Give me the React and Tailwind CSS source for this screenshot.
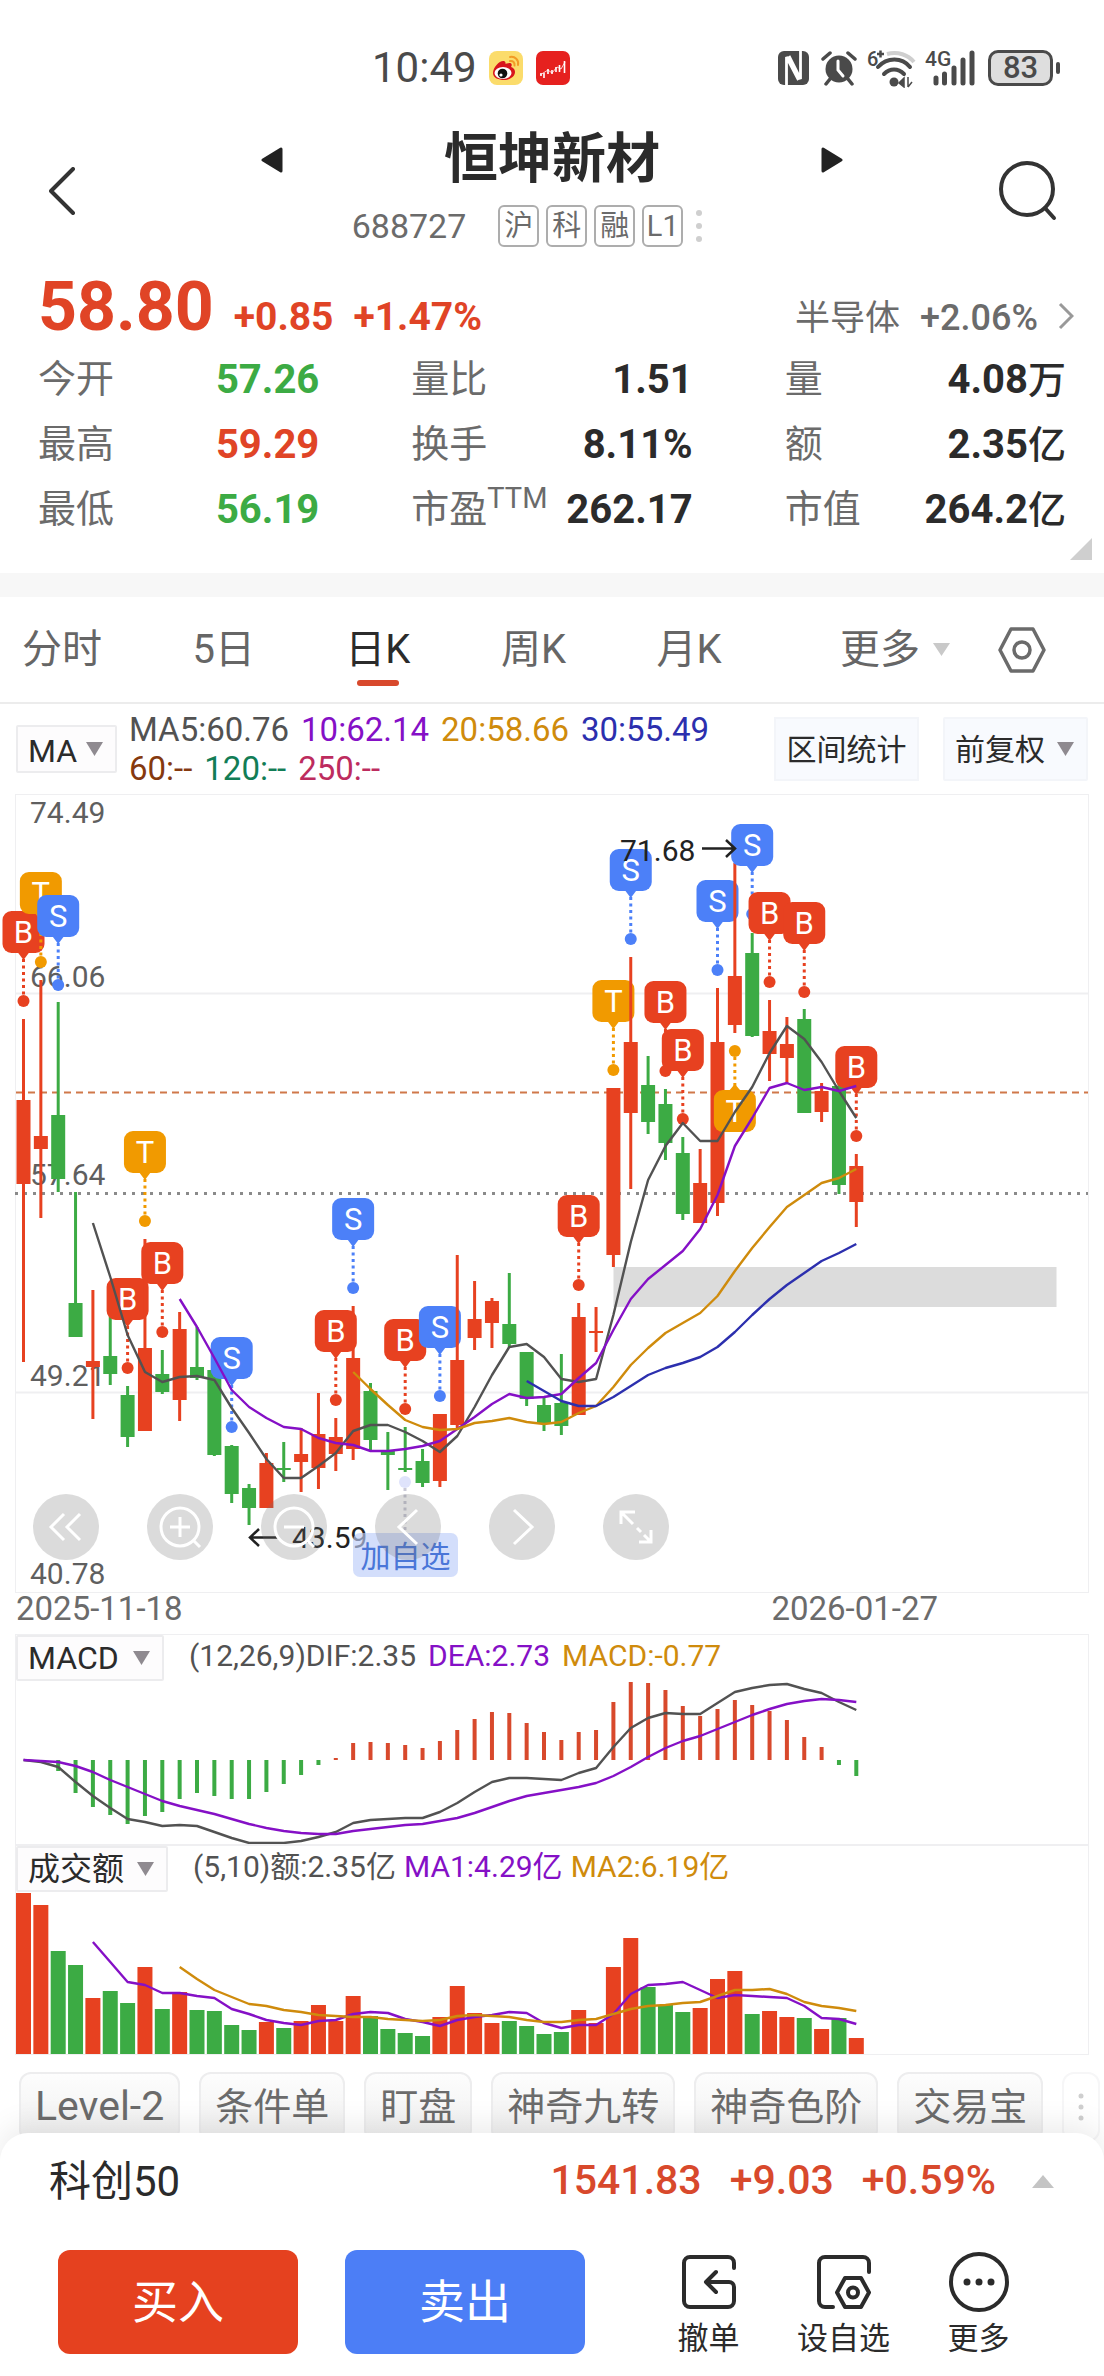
import React, { useState } from "react";

const RED = "#e74120";
const GREEN = "#3cab44";
const DARK = "#525252";
const PURPLE = "#8510c6";
const GOLD = "#cf8b0c";
const NAVY = "#2c2fae";

const STEP = 17.35;
const xAt = (i) => 23.5 + STEP * i;

// [direction, high, body top, body bottom, low]
const CANDLES = [
  ["r", 1019, 1100, 1184, 1362], ["r", 980, 1136, 1149, 1218], ["g", 1002, 1115, 1179, 1192],
  ["g", 1192, 1303, 1337, 1337], ["r", 1290, 1361, 1367, 1419], ["g", 1310, 1356, 1374, 1385],
  ["g", 1386, 1395, 1437, 1447], ["r", 1239, 1348, 1431, 1431], ["g", 1350, 1374, 1392, 1394],
  ["r", 1312, 1329, 1400, 1421], ["g", 1327, 1367, 1378, 1380], ["g", 1369, 1370, 1455, 1456],
  ["g", 1445, 1446, 1494, 1503], ["g", 1484, 1488, 1508, 1525], ["r", 1453, 1463, 1508, 1508],
  ["g", 1442, 1468, 1470, 1482], ["r", 1428, 1454, 1462, 1492], ["r", 1393, 1434, 1468, 1489],
  ["r", 1418, 1437, 1454, 1471], ["r", 1306, 1358, 1449, 1460], ["g", 1383, 1391, 1440, 1450],
  ["g", 1432, 1450, 1455, 1490], ["g", 1427, 1468, 1470, 1472], ["g", 1449, 1461, 1483, 1487],
  ["r", 1414, 1414, 1481, 1487], ["r", 1255, 1360, 1425, 1429], ["r", 1281, 1319, 1338, 1350],
  ["r", 1298, 1301, 1323, 1348], ["g", 1273, 1324, 1344, 1348], ["g", 1352, 1352, 1399, 1406],
  ["g", 1397, 1405, 1424, 1431], ["g", 1354, 1403, 1426, 1435], ["r", 1303, 1317, 1415, 1415],
  ["r", 1307, 1331, 1333, 1352], ["r", 1088, 1088, 1255, 1267], ["r", 957, 1042, 1113, 1189],
  ["g", 1056, 1085, 1122, 1134], ["g", 1089, 1104, 1143, 1160], ["g", 1137, 1153, 1214, 1220],
  ["r", 1149, 1183, 1223, 1223], ["r", 988, 1042, 1203, 1216], ["r", 863, 976, 1025, 1033],
  ["g", 933, 953, 1036, 1037], ["r", 1000, 1031, 1054, 1081], ["r", 1017, 1044, 1058, 1083],
  ["g", 1009, 1019, 1113, 1113], ["r", 1083, 1091, 1112, 1122], ["g", 1083, 1086, 1185, 1194],
  ["r", 1154, 1166, 1202, 1227],
];

// trade marks keyed by candle: [letter, top of the badge, badge under the dot]
const MARKS = {
  0: ["B", 911], 1: ["T", 872], 2: ["S", 895], 6: ["B", 1278], 7: ["T", 1131], 8: ["B", 1242],
  12: ["S", 1337], 18: ["B", 1310], 19: ["S", 1198], 22: ["B", 1319], 24: ["S", 1306],
  32: ["B", 1195], 34: ["T", 980], 35: ["S", 849], 37: ["B", 981], 38: ["B", 1029],
  40: ["S", 880], 41: ["T", 1090, true], 42: ["S", 824], 43: ["B", 892], 45: ["B", 902], 48: ["B", 1046],
};
const MARK_COLORS = { B: RED, S: "#4c80f8", T: "#f19a00" };

const MA5 = [
  1223, 1277, 1335, 1372, 1382, 1377, 1376, 1380, 1408, 1433, 1459, 1478, 1478, 1466, 1453, 1431,
  1425, 1425, 1432, 1441, 1452, 1436, 1407, 1375, 1347, 1344, 1357, 1379, 1382, 1379, 1315, 1242,
  1180, 1146, 1123, 1141, 1141, 1112, 1087, 1053, 1026, 1039, 1062, 1091, 1118,
];
const MA10 = [
  1299, 1327, 1358, 1390, 1407, 1418, 1427, 1429, 1438, 1443, 1445, 1451, 1451, 1449, 1446, 1441,
  1429, 1417, 1404, 1394, 1398, 1397, 1394, 1378, 1363, 1330, 1299, 1279, 1265, 1251, 1229, 1195,
  1146, 1118, 1088, 1083, 1090, 1087, 1091, 1086,
];
const MA20 = [
  1372, 1389, 1405, 1420, 1427, 1430, 1429, 1423, 1421, 1418, 1422, 1424, 1422, 1413, 1406, 1387,
  1365, 1348, 1333, 1323, 1313, 1296, 1271, 1248, 1227, 1207, 1195, 1183, 1178, 1169,
];
const MA30 = [
  1381, 1391, 1401, 1406, 1406, 1397, 1386, 1375, 1368, 1363, 1357, 1347, 1332, 1315, 1299, 1285,
  1273, 1261, 1253, 1244,
];

const MACD = [
  0, 0, 11, 33, 47, 55, 64, 56, 52, 39, 33, 36, 39, 39, 32, 24, 15, 5, -2, -17, -18, -17, -15, -12,
  -19, -30, -41, -48, -47, -37, -28, -20, -28, -30, -58, -78, -77, -70, -54, -44, -51, -60, -55,
  -49, -40, -23, -13, 5, 16,
];
const DIF = [
  0, 2, 7, 22, 36, 48, 59, 62, 66, 65, 66, 72, 78, 83, 83, 83, 81, 77, 72, 63, 60, 59, 58, 58, 52,
  43, 32, 22, 18, 18, 19, 20, 13, 8, -13, -32, -42, -47, -46, -46, -57, -68, -72, -75, -76, -71,
  -67, -58, -50,
];
const DEA = [
  0, 1, 2, 6, 12, 20, 27, 34, 41, 46, 50, 54, 59, 64, 68, 71, 73, 74, 74, 71, 69, 67, 65, 64, 61,
  58, 53, 47, 41, 36, 33, 30, 27, 23, 16, 7, -3, -12, -19, -24, -31, -38, -45, -51, -56, -59, -61,
  -60, -58,
];

const VOLUME = [
  161, 149, 103, 89, 56, 63, 51, 87, 45, 62, 44, 43, 29, 24, 32, 26, 33, 49, 33, 58, 38, 25, 21, 18,
  37, 68, 41, 31, 33, 28, 20, 22, 44, 31, 87, 116, 67, 49, 42, 46, 75, 83, 40, 43, 37, 36, 25, 36, 16,
];
const VOL_MA1 = [
  112, 92, 72, 69, 61, 61, 58, 56, 45, 40, 34, 31, 29, 33, 34, 40, 42, 41, 35, 32, 28, 34, 37, 39,
  42, 41, 31, 26, 29, 29, 40, 60, 69, 70, 72, 64, 56, 59, 58, 57, 56, 48, 36, 35, 30,
];
const VOL_MA2 = [
  87, 75, 64, 57, 50, 48, 44, 42, 39, 38, 37, 37, 35, 34, 33, 34, 38, 39, 38, 37, 34, 32, 32, 34,
  35, 40, 45, 48, 49, 51, 52, 58, 64, 64, 65, 60, 52, 48, 46, 43,
];

const STATS = [
  { label: "今开", value: "57.26", color: "text-[#3cab44]" },
  { label: "量比", value: "1.51", color: "text-[#2b2b2b]" },
  { label: "量", value: "4.08", unit: "万", color: "text-[#2b2b2b]" },
  { label: "最高", value: "59.29", color: "text-[#e04426]" },
  { label: "换手", value: "8.11%", color: "text-[#2b2b2b]" },
  { label: "额", value: "2.35", unit: "亿", color: "text-[#2b2b2b]" },
  { label: "最低", value: "56.19", color: "text-[#3cab44]" },
  { label: "市盈", sup: "TTM", value: "262.17", color: "text-[#2b2b2b]" },
  { label: "市值", value: "264.2", unit: "亿", color: "text-[#2b2b2b]" },
];

const TABS = ["分时", "5日", "日K", "周K", "月K"];
const CHIPS = ["Level-2", "条件单", "盯盘", "神奇九转", "神奇色阶", "交易宝"];

const points = (values, start, toY) =>
  values.map((v, k) => `${xAt(start + k).toFixed(1)},${toY(v)}`).join(" ");

function Line({ values, start = 0, color, toY = (v) => v }) {
  return <polyline points={points(values, start, toY)} fill="none" stroke={color} strokeWidth="2.4" strokeLinejoin="round" />;
}

// ── Status bar ─────────────────────────
function StatusBar() {
  return (
    <div className="pt-[47px] pl-[372px] pr-[44px] flex justify-between">
      <div className="h-[42px] flex items-center">
        <span className="text-[42px] leading-[42px] text-[#4a4a4a]">10:49</span>
        <svg className="ml-3 w-[34px] h-[34px]" viewBox="0 0 34 34">
          <rect width="34" height="34" rx="8" fill="#fbdc6b" />
          <path d="M4 22c0-6 7-13 11-12 2 .5 1.500 3 1.500 3s5-2 6 0c.7 1.500-.5 3-.5 3s4 1.200 4 5c0 5-6 8-11 8S4 27 4 22z" fill="#d8141c" />
          <ellipse cx="14" cy="22" rx="8.500" ry="6" fill="#fff" />
          <circle cx="13.500" cy="22.500" r="4.800" fill="#111" />
          <circle cx="12" cy="24" r="1.600" fill="#fff" />
          <path d="M21 6c5-1 9 3 8 8M21 10c3-.5 5 1.500 4.500 4.500" stroke="#f29b26" strokeWidth="2" fill="none" strokeLinecap="round" />
        </svg>
        <svg className="ml-[13px] w-[34px] h-[34px]" viewBox="0 0 34 34">
          <rect width="34" height="34" rx="7" fill="#e6211f" />
          <path d="M5 22v3M8 22v5M12 18v5M16 19v4M20 16v5M23.500 14v7M28.500 10v12" stroke="#fff" strokeWidth="1.600" />
          <path d="M4 24l8-5 4 3 5-6 4 2 4-7" stroke="#fff" strokeWidth=".8" fill="none" />
        </svg>
      </div>
      <div className="h-[42px] flex items-center text-[#4a4a4a]">
        <svg className="w-[31px] h-[34px]" viewBox="0 0 31 34">
          <rect width="31" height="34" rx="6" fill="currentColor" />
          <path d="M8.500 34V6l12 23M22.500 0v28L11 5" fill="none" stroke="#fff" strokeWidth="2.800" />
        </svg>
        <svg className="ml-3 w-[36px] h-[36px]" viewBox="0 0 36 36">
          <circle cx="18" cy="19" r="13.500" fill="currentColor" />
          <path d="M2 9l7-6M34 9l-7-6M9 29l-4 5M27 29l4 5" stroke="currentColor" strokeWidth="3.500" strokeLinecap="round" />
          <path d="M17 11v9l5 6" fill="none" stroke="#fff" strokeWidth="3" strokeLinecap="round" />
        </svg>
        <svg className="ml-[10px] w-[50px] h-[40px]" viewBox="0 0 50 40">
          <text x="0" y="18" fontSize="20" fontWeight="500" fill="currentColor">6</text>
          <path d="M10 6h7M13.500 2.500v7" stroke="currentColor" strokeWidth="2.500" />
          <path d="M20 6c11-3 21 1 27 8" fill="none" stroke="#cfcfcf" strokeWidth="4" />
          <path d="M11 19c9-10 24-10 32 0M17 26c6-6 14-6 20 0" fill="none" stroke="currentColor" strokeWidth="4" strokeLinecap="round" />
          <circle cx="27" cy="34" r="4.500" fill="currentColor" />
          <path d="M37 30v9l-5-4zM41 29v10M41 39l4-5" fill="currentColor" stroke="currentColor" strokeWidth="1.500" />
        </svg>
        <svg className="ml-2 w-[52px] h-[40px]" viewBox="0 0 52 40">
          <text x="0" y="18" fontSize="21" fontWeight="500" fill="currentColor">4G</text>
          <path d="M11 30v5M19.500 26v9M29 20v15M38 12v23M47 5v30" stroke="currentColor" strokeWidth="5" strokeLinecap="round" />
        </svg>
        <div className="ml-[11px] w-[65px] h-[36px] rounded-[10px] border-[3px] border-[#4a4a4a] bg-[#dedede] flex items-center justify-center">
          <span className="text-[31px] leading-[30px] font-medium">83</span>
        </div>
        <span className="ml-[3px] w-[4px] h-[12px] rounded bg-[#4a4a4a]" />
      </div>
    </div>
  );
}

// ── Title bar ──────────────────────────
function Header() {
  return (
    <header className="pt-[38px] px-[49px] flex items-center justify-between">
      <button type="button" aria-label="返回" className="w-14">
        <svg className="w-[28px] h-[48px]" viewBox="0 0 28 48">
          <path d="M24 2L2 24l22 22" fill="none" stroke="#333" strokeWidth="4" strokeLinecap="round" strokeLinejoin="round" />
        </svg>
      </button>
      <div className="w-[582px] pb-2">
        <div className="flex items-center justify-between">
          <button type="button" aria-label="上一只">
            <svg className="w-[22px] h-[26px]" viewBox="0 0 22 26"><path d="M20 2v22L2 13z" fill="#222" stroke="#222" strokeWidth="3" strokeLinejoin="round" /></svg>
          </button>
          <h1 className="text-[54px] leading-[66px] font-bold text-[#2b2b2b]">恒坤新材</h1>
          <button type="button" aria-label="下一只">
            <svg className="w-[22px] h-[26px]" viewBox="0 0 22 26"><path d="M2 2v22l18-11z" fill="#222" stroke="#222" strokeWidth="3" strokeLinejoin="round" /></svg>
          </button>
        </div>
        <div className="mt-3 pr-[50px] h-[42px] flex items-center justify-center text-[#6b6b6b]">
          <span className="mr-8 text-[34px] leading-[42px]">688727</span>
          <div className="flex gap-[7px]">
            {["沪", "科", "融", "L1"].map((tag) => (
              <span key={tag} className="w-[41px] h-[42px] rounded-md border-2 border-[#adadad] flex items-center justify-center text-[29px] leading-[38px]">{tag}</span>
            ))}
          </div>
          <svg className="ml-[13px] w-[6px] h-[32px]" viewBox="0 0 6 32" fill="#cfcfcf">
            <circle cx="3" cy="3" r="3" /><circle cx="3" cy="16" r="3" /><circle cx="3" cy="29" r="3" />
          </svg>
        </div>
      </div>
      <button type="button" aria-label="搜索" className="w-14">
        <svg className="w-[58px] h-[60px]" viewBox="0 0 58 60">
          <circle cx="28" cy="28" r="26" fill="none" stroke="#333" strokeWidth="4" />
          <path d="M46 47l9 10" stroke="#333" strokeWidth="4" strokeLinecap="round" />
        </svg>
      </button>
    </header>
  );
}

// ── Quote ──────────────────────────────
function Quote() {
  return (
    <section className="relative px-[38px] pb-[31px]">
      <div className="h-[92px] pt-[18px] flex items-baseline leading-none text-[#e04426]">
        <span className="text-[68px] leading-[68px] font-bold">58.80</span>
        <span className="ml-5 text-[39px] font-bold">+0.85</span>
        <span className="ml-5 text-[39px] font-bold">+1.47%</span>
        <a href="#sector" className="ml-auto -mr-2 flex items-baseline text-[#6b6b6b]">
          <span className="text-[35px]">半导体</span>
          <span className="ml-5 text-[36px] font-medium">+2.06%</span>
          <svg className="ml-5 w-[16px] h-[28px]" viewBox="0 0 16 28"><path d="M2 2l12 12L2 26" fill="none" stroke="#999" strokeWidth="3" /></svg>
        </a>
      </div>
      <dl className="grid grid-cols-3 gap-x-[92px]">
        {STATS.map((s) => (
          <div key={s.label} className="h-[65px] flex items-center justify-between whitespace-nowrap">
            <dt className="text-[38px] text-[#6b6b6b]">
              {s.label}
              {s.sup && <sup className="text-[29px]">{s.sup}</sup>}
            </dt>
            <dd className={`text-[40px] font-bold ${s.color}`}>
              {s.value}
              {s.unit && <span className="text-[38px] font-medium">{s.unit}</span>}
            </dd>
          </div>
        ))}
      </dl>
      <svg className="absolute right-3 bottom-[13px] w-[22px] h-[22px]" viewBox="0 0 22 22"><path d="M22 0v22H0z" fill="#cfcfcf" /></svg>
    </section>
  );
}

// ── Period tabs ────────────────────────
function PeriodTabs() {
  const [active, setActive] = useState("日K");
  return (
    <nav className="h-[107px] px-[22px] flex items-center border-b-2 border-[#ececec] text-[40px] text-[#666]">
      <div className="w-[66%] h-full flex justify-between">
        {TABS.map((tab) => (
          <button key={tab} type="button" onClick={() => setActive(tab)} className={`relative h-full ${tab === active ? "text-[#2b2b2b]" : ""}`}>
            {tab}
            {tab === active && <span className="absolute bottom-4 left-1/2 -translate-x-1/2 w-[42px] h-[6px] rounded-full bg-[#d8492c]" />}
          </button>
        ))}
      </div>
      <button type="button" className="ml-auto flex items-center">
        更多
        <svg className="ml-[13px] w-[17px] h-[13px]" viewBox="0 0 17 13"><path d="M0 0h17L8.500 13z" fill="#c9c9c9" /></svg>
      </button>
      <button type="button" aria-label="设置" className="ml-12 mr-9">
        <svg className="w-[48px] h-[46px]" viewBox="0 0 48 46" fill="none" stroke="#6b6b6b" strokeWidth="3.500" strokeLinejoin="round">
          <path d="M13 2h22l11 21-11 21H13L2 23z" /><circle cx="24" cy="23" r="8" />
        </svg>
      </button>
    </nav>
  );
}

function Dropdown({ label, options, className }) {
  return (
    <div className={`relative shrink-0 rounded-[2px] border-2 text-[#2b2b2b] ${className}`}>
      <select aria-label={label} className="w-full h-full appearance-none bg-transparent pl-[10px] outline-none">
        {options.map((o) => <option key={o}>{o}</option>)}
      </select>
      <svg className="absolute right-3 top-1/2 -translate-y-1/2 w-[17px] h-[14px] pointer-events-none" viewBox="0 0 17 14"><path d="M0 0h17L8.500 14z" fill="#8f8a90" /></svg>
    </div>
  );
}

// ── Candle chart ───────────────────────
function Mark({ x, mark }) {
  const [letter, top, below] = mark;
  const color = MARK_COLORS[letter];
  const dotY = below ? top - 39 : top + 90;
  return (
    <g>
      {below
        ? <path d={`M${x - 6} ${top + 1}h12l-6 -7z`} fill={color} />
        : <path d={`M${x - 6} ${top + 41}h12l-6 8z`} fill={color} />}
      <line x1={x} x2={x} y1={below ? top - 4 : top + 48} y2={dotY} stroke={color} strokeWidth="3" strokeDasharray="3 3.500" />
      <circle cx={x} cy={dotY} r="6" fill={color} />
      <rect x={x - 21} y={top} width="42" height="42" rx="9" fill={color} />
      <text x={x} y={top + 32} fontSize="31" textAnchor="middle" fill="#fff">{letter}</text>
    </g>
  );
}

function CandleChart() {
  return (
    <svg className="block w-full h-auto overflow-visible" viewBox="16 795 1072 797" role="img" aria-label="日K线">
      <path d="M16 993.500H1088M16 1392.500H1088" stroke="#efeff1" strokeWidth="2" />
      <path d="M16 1092.500H1088" stroke="#d0784a" strokeWidth="2" strokeDasharray="7 5" />
      <path d="M15 1193.500H1088" stroke="#8a8a8a" strokeWidth="3" strokeDasharray="3 6" />
      <rect x="613.500" y="1267" width="443" height="40" fill="#dcdcdc" />
      <g fontSize="30" fill="#5f5f5f">
        <text x="30" y="823">74.49</text>
        <text x="30" y="987">66.06</text>
        <text x="30" y="1185">57.64</text>
        <text x="30" y="1386">49.21</text>
        <text x="30" y="1584">40.78</text>
      </g>
      {CANDLES.map(([dir, high, top, bottom, low], i) => {
        const color = dir === "r" ? RED : GREEN;
        return (
          <g key={i}>
            <line x1={xAt(i)} x2={xAt(i)} y1={high} y2={low} stroke={color} strokeWidth="3" />
            <rect x={xAt(i) - 7} y={top} width="14" height={bottom - top} fill={color} />
            {MARKS[i] && <Mark x={xAt(i)} mark={MARKS[i]} />}
          </g>
        );
      })}
      <Line values={MA5} start={4} color={DARK} />
      <Line values={MA10} start={9} color={PURPLE} />
      <Line values={MA20} start={19} color={GOLD} />
      <Line values={MA30} start={29} color={NAVY} />

      {/* highest and lowest price */}
      <g fontSize="30" fill="#222" stroke="none">
        <text x="620" y="861">71.68</text>
        <text x="292" y="1548">43.59</text>
      </g>
      <path d="M702 848.500h33M726 840l9 8.500-9 8.500M279 1537.500h-29M259 1529l-9 8.500 9 8.500" fill="none" stroke="#222" strokeWidth="2.500" />

      {/* date the stock was added to the watch list */}
      <circle cx="405" cy="1482" r="6" fill="#dfe3fb" />
      <path d="M405 1488v45" stroke="#c9c9d6" strokeWidth="3" strokeDasharray="3 3.500" />
      <rect x="353" y="1533" width="105" height="44" rx="7" fill="#bccdf9" fillOpacity=".65" />
      <text x="405.500" y="1567" fontSize="30" textAnchor="middle" fill="#4a76d8">加自选</text>
    </svg>
  );
}

function ChartControls() {
  const controls = [
    ["最左", <path key="p" d="M31 20L18 33l13 13M47 20L34 33l13 13" />],
    ["放大", <g key="p"><circle cx="33" cy="33" r="19" /><path d="M33 23v20M23 33h20M46 46l7 7" /></g>],
    ["缩小", <g key="p"><circle cx="33" cy="33" r="19" /><path d="M23 33h20M46 46l7 7" /></g>],
    ["左移", <path key="p" d="M42 16L24 33l18 17" />],
    ["右移", <path key="p" d="M25 16l18 17-18 17" />],
    ["全屏", <path key="p" d="M18 30V18h14M18 18l12 12M34 34l4 4M41 41l7 7M36 48h12V36" />],
  ];
  return (
    <div className="absolute left-[17px] bottom-8 flex gap-12">
      {controls.map(([name, shape]) => (
        <button key={name} type="button" aria-label={name} className="w-[66px] h-[66px] rounded-full bg-[#70707040]">
          <svg viewBox="0 0 66 66" fill="none" stroke="#fff" strokeWidth="3">{shape}</svg>
        </button>
      ))}
    </div>
  );
}

function MacdChart() {
  const toY = (v) => 80 + v;
  return (
    <svg className="block w-full h-auto" viewBox="16 0 1072 164" role="img" aria-label="MACD">
      {MACD.map((v, i) => (
        <rect key={i} x={xAt(i) - 2} y={v > 0 ? 80 : 80 + v} width="4" height={Math.abs(v)} fill={v > 0 ? GREEN : "#d8492c"} />
      ))}
      <Line values={DIF} color={DARK} toY={toY} />
      <Line values={DEA} color={PURPLE} toY={toY} />
    </svg>
  );
}

function VolumeChart() {
  const toY = (v) => 163 - v;
  return (
    <svg className="block w-full h-auto" viewBox="16 0 1072 163" role="img" aria-label="成交额">
      {VOLUME.map((v, i) => (
        <rect key={i} x={xAt(i) - 7.5} y={163 - v} width="15" height={v} fill={CANDLES[i][0] === "r" ? RED : GREEN} />
      ))}
      <Line values={VOL_MA1} start={4} color={PURPLE} toY={toY} />
      <Line values={VOL_MA2} start={9} color={GOLD} toY={toY} />
    </svg>
  );
}

function ChartPanel() {
  return (
    <section>
      <div className="h-[90px] px-4 flex items-center">
        <Dropdown label="主图指标" options={["MA", "BOLL"]} className="w-[101px] h-[48px] text-[32px] border-[#ececee] bg-[#fdfcfd]" />
        <div className="ml-3 text-[33px] leading-[39px]">
          <div className="flex gap-3">
            <span className="text-[#525252]">MA5:60.76</span>
            <span className="text-[#8510c6]">10:62.14</span>
            <span className="text-[#cf8b0c]">20:58.66</span>
            <span className="text-[#2c2fae]">30:55.49</span>
          </div>
          <div className="flex gap-3">
            <span className="text-[#85390e]">60:--</span>
            <span className="text-[#127d56]">120:--</span>
            <span className="text-[#bd2c5e]">250:--</span>
          </div>
        </div>
        <button type="button" className="ml-auto w-[145px] h-[64px] border-2 border-[#f3f5f9] bg-[#f8fafe] text-[30px] text-[#2b2b2b]">区间统计</button>
        <Dropdown label="复权" options={["前复权", "后复权", "不复权"]} className="ml-6 w-[145px] h-[64px] text-[30px] border-[#f3f5f9] bg-[#f8fafe]" />
      </div>

      <div className="relative mx-[15px] border border-[#efeff1]">
        <CandleChart />
        <ChartControls />
      </div>
      <div className="h-[41px] pl-4 pr-[166px] flex justify-between text-[33px] leading-[32px] text-[#6b6b6b]">
        <span>2025-11-18</span>
        <span>2026-01-27</span>
      </div>

      <div className="mx-[15px] border border-[#efeff1]">
        <div className="h-[45px] flex items-start text-[30px] leading-[42px]">
          <Dropdown label="副图指标" options={["MACD", "KDJ", "RSI"]} className="w-[148px] h-[46px] mr-[25px] text-[32px] border-[#ececee] bg-[#fdfcfd]" />
          <div className="flex gap-3">
            <span className="text-[#525252]">(12,26,9)DIF:2.35</span>
            <span className="text-[#8510c6]">DEA:2.73</span>
            <span className="text-[#cf8b0c]">MACD:-0.77</span>
          </div>
        </div>
        <MacdChart />
        <div className="h-[47px] flex items-start border-t-2 border-[#efeff1] text-[30px] leading-[42px]">
          <Dropdown label="副图指标二" options={["成交额", "成交量"]} className="w-[152px] h-[46px] mr-[25px] text-[32px] border-[#ececee] bg-[#fdfcfd]" />
          <div className="flex gap-2">
            <span className="text-[#525252]">(5,10)额:2.35亿</span>
            <span className="text-[#8510c6]">MA1:4.29亿</span>
            <span className="text-[#cf8b0c]">MA2:6.19亿</span>
          </div>
        </div>
        <VolumeChart />
      </div>
    </section>
  );
}

// ── Bottom sheet ───────────────────────
function Tool({ label, children }) {
  return (
    <button type="button" className="flex flex-col items-center text-[31px] leading-[50px] text-[#2b2b2b]">
      <svg className="w-[64px] h-[64px]" viewBox="0 0 64 64" fill="none" stroke="#2b2b2b" strokeWidth="4" strokeLinecap="round" strokeLinejoin="round">{children}</svg>
      {label}
    </button>
  );
}

function BottomSheet() {
  return (
    <footer className="relative -mt-6 rounded-t-[28px] bg-white shadow-[0_-8px_30px_rgba(0,0,0,0.08)]">
      <div className="h-[96px] pl-[49px] pr-[50px] flex items-center">
        <span className="text-[42px] text-[#2b2b2b]">科创50</span>
        <div className="ml-auto flex items-center gap-7 text-[41px] font-medium text-[#d8492c]">
          <span>1541.83</span>
          <span>+9.03</span>
          <span>+0.59%</span>
        </div>
        <svg className="ml-9 w-[22px] h-[13px]" viewBox="0 0 22 13"><path d="M11 0l11 13H0z" fill="#c4c4c4" /></svg>
      </div>
      <div className="mt-[21px] px-[58px] pb-3 flex items-start">
        <button type="button" className="flex-1 h-[104px] rounded-xl bg-[#e5411f] text-[46px] text-white">买入</button>
        <button type="button" className="ml-[47px] flex-1 h-[104px] rounded-xl bg-[#4c7ef6] text-[46px] text-white">卖出</button>
        <div className="ml-14 w-[405px] grid grid-cols-3">
          <Tool label="撤单">
            <path d="M57 18v-5a6 6 0 0 0-6-6H13a6 6 0 0 0-6 6v38a6 6 0 0 0 6 6h38a6 6 0 0 0 6-6V37a5 5 0 0 0-5-5H30M39 22L29 32l10 10" />
          </Tool>
          <Tool label="设自选">
            <path d="M57 22v-9a6 6 0 0 0-6-6H13a6 6 0 0 0-6 6v38a6 6 0 0 0 6 6h8" />
            <path d="M33 28h16l8 14.500-8 14.500H33l-8-14.500z" /><circle cx="41" cy="42.500" r="5" />
          </Tool>
          <Tool label="更多">
            <circle cx="32" cy="32" r="28" />
            <path d="M20 32h.01M32 32h.01M44 32h.01" strokeWidth="7" />
          </Tool>
        </div>
      </div>
    </footer>
  );
}

export default function App() {
  return (
    <main className="w-full overflow-hidden bg-white font-[family-name:Roboto,'Noto_Sans_CJK_SC',sans-serif]">
      <StatusBar />
      <Header />
      <Quote />
      <div className="h-6 bg-[#f7f7f7]" />
      <PeriodTabs />
      <ChartPanel />
      <div className="mt-[17px] pl-[19px] h-[85px] flex gap-[19px] overflow-hidden whitespace-nowrap text-[#6b6b6b]">
        {CHIPS.map((chip) => (
          <button
            key={chip}
            type="button"
            className={`shrink-0 h-[70px] px-[14px] rounded-xl border-2 border-[#ededee] bg-linear-to-b from-[#fdfdfd] to-[#efefef] ${chip === "Level-2" ? "text-[41px]" : "text-[38px]"}`}
          >
            {chip}
          </button>
        ))}
        <button type="button" aria-label="更多功能" className="shrink-0 h-[70px] px-[14px] rounded-xl border-2 border-[#f6f6f7]">
          <svg className="w-[6px] h-[28px]" viewBox="0 0 6 28" fill="#cfcfcf"><circle cx="3" cy="3" r="2.500" /><circle cx="3" cy="14" r="2.500" /><circle cx="3" cy="25" r="2.500" /></svg>
        </button>
      </div>
      <BottomSheet />
    </main>
  );
}
